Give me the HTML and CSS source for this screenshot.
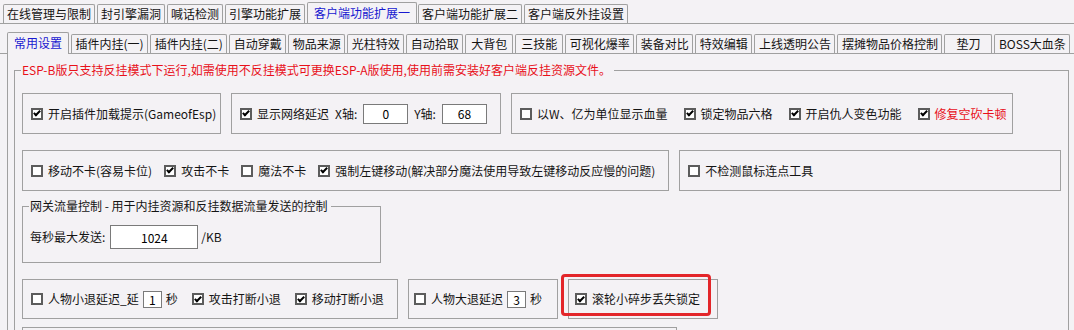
FILE: index.html
```html
<!DOCTYPE html>
<html lang="zh-CN">
<head>
    <meta charset="UTF-8">
    <meta name="viewport" content="width=device-width, initial-scale=1.0">
    <title>客户端功能扩展一</title>
    <link rel="stylesheet" href="styles.css">
</head>
<body>
    <div class="top-tabs">
        <div class="tab">在线管理与限制</div>
        <div class="tab">封引擎漏洞</div>
        <div class="tab">喊话检测</div>
        <div class="tab">引擎功能扩展</div>
        <div class="tab active">客户端功能扩展一</div>
        <div class="tab">客户端功能扩展二</div>
        <div class="tab">客户端反外挂设置</div>
    </div>
    <div class="sub-tabs">
        <div class="tab active">常用设置</div>
        <div class="tab">插件内挂(一)</div>
        <div class="tab">插件内挂(二)</div>
        <div class="tab">自动穿戴</div>
        <div class="tab">物品来源</div>
        <div class="tab">光柱特效</div>
        <div class="tab">自动拾取</div>
        <div class="tab">大背包</div>
        <div class="tab">三技能</div>
        <div class="tab">可视化爆率</div>
        <div class="tab">装备对比</div>
        <div class="tab">特效编辑</div>
        <div class="tab">上线透明公告</div>
        <div class="tab">摆摊物品价格控制</div>
        <div class="tab">垫刀</div>
        <div class="tab">BOSS大血条</div>
    </div>
    <div class="sub-page">
        <fieldset class="group notice">
            <legend>ESP-B版只支持反挂模式下运行,如需使用不反挂模式可更换ESP-A版使用,使用前需安装好客户端反挂资源文件。</legend>
            <div class="row">
                <div class="box box-a">
                    <label class="check"><span class="cb on"></span>开启插件加载提示(GameofEsp)</label>
                </div>
                <div class="box box-b">
                    <label class="check"><span class="cb on"></span>显示网络延迟</label>
                    <span>X轴:</span>
                    <input class="num" type="text" value="0">
                    <span>Y轴:</span>
                    <input class="num" type="text" value="68">
                </div>
                <div class="box box-c">
                    <label class="check"><span class="cb"></span>以W、亿为单位显示血量</label>
                    <label class="check"><span class="cb on"></span>锁定物品六格</label>
                    <label class="check"><span class="cb on"></span>开启仇人变色功能</label>
                    <label class="check red"><span class="cb on"></span>修复空砍卡顿</label>
                </div>
            </div>
            <div class="row">
                <div class="box box-d">
                    <label class="check"><span class="cb"></span>移动不卡(容易卡位)</label>
                    <label class="check"><span class="cb on"></span>攻击不卡</label>
                    <label class="check"><span class="cb"></span>魔法不卡</label>
                    <label class="check"><span class="cb on"></span>强制左键移动(解决部分魔法使用导致左键移动反应慢的问题)</label>
                </div>
                <div class="box box-e">
                    <label class="check"><span class="cb"></span>不检测鼠标连点工具</label>
                </div>
            </div>
            <fieldset class="group gateway">
                <legend>网关流量控制 - 用于内挂资源和反挂数据流量发送的控制</legend>
                <div class="send-line">
                    <span>每秒最大发送:</span>
                    <input class="num wide" type="text" value="1024">
                    <span>/KB</span>
                </div>
            </fieldset>
            <div class="row">
                <div class="box box-f">
                    <label class="check"><span class="cb"></span>人物小退延迟_延<input class="num small" type="text" value="1">秒</label>
                    <label class="check"><span class="cb on"></span>攻击打断小退</label>
                    <label class="check"><span class="cb on"></span>移动打断小退</label>
                </div>
                <div class="box box-g">
                    <label class="check"><span class="cb"></span>人物大退延迟<input class="num small" type="text" value="3">秒</label>
                </div>
                <div class="box box-h">
                    <label class="check"><span class="cb on"></span>滚轮小碎步丢失锁定</label>
                    <span class="mark"></span>
                </div>
            </div>
            <div class="row row-last">
                <div class="box box-i"></div>
            </div>
        </fieldset>
    </div>
</body>
</html>
```

FILE: styles.css
```css
html, body {
    overflow: hidden;
}

body {
    margin: 0;
    background-color: #f4f2f5;
    color: #141414;
    font-family: "Noto Sans CJK SC", sans-serif;
    font-size: 12px;
    line-height: 16px;
}

/* tab strips */
.top-tabs,
.sub-tabs {
    display: flex;
    align-items: flex-end;
    height: 19px;
    border-bottom: 1px solid #a0a0a0;
}

.top-tabs {
    padding: 4px 0 0 3px;
}

.sub-tabs {
    padding: 10px 0 0 7px;
}

.tab {
    box-sizing: border-box;
    height: 19px;
    padding: 0 3px;
    margin-right: 2px;
    border: 1px solid #a0a0a0;
    border-bottom: none;
    border-radius: 2px 2px 0 0;
    line-height: 18px;
    text-align: center;
    white-space: nowrap;
}

    .tab.active {
        height: 21px;
        padding: 0 6px;
        margin-right: 1px;
        line-height: 20px;
        color: #1818d0;
        background-color: #f4f2f5;
    }

.sub-tabs .tab {
    min-width: 48px;
    padding: 0 3.5px;
}

    .sub-tabs .tab.active {
        height: 22px;
        padding: 0 6px;
        margin-bottom: -1px;
        margin-right: 2px;
    }

.sub-page {
    margin-left: 7px;
    padding: 8px 0 0 6px;
    border-left: 1px solid #a0a0a0;
}

/* group boxes */
.group {
    margin: 0;
    min-width: 0;
    border: 1px solid #a0a0a0;
}

    .group > legend {
        margin-left: -1px;
        padding: 0 3px 0 1px;
        line-height: 16px;
    }

.notice {
    margin-right: 5px;
    padding: 15px 7px 0;
    min-height: 300px;
}

    .notice > legend {
        color: #e8101a;
    }

.gateway {
    box-sizing: border-box;
    width: 359px;
    margin-top: 7px;
    padding: 11px 7px 13px;
}

.send-line {
    display: flex;
    align-items: center;
    gap: 3px;
}

.row {
    display: flex;
    gap: 10px;
    margin-top: 16px;
}

.notice > legend + .row {
    margin-top: 0;
}

.row-last {
    margin-top: 8px;
}

.box {
    display: flex;
    align-items: center;
    gap: 14px;
    box-sizing: border-box;
    height: 41px;
    padding: 0 8px;
    border: 1px solid #a0a0a0;
}

.box-a { width: 199px; }
.box-b { width: 270px; gap: 6px; }
.box-c { width: 502px; gap: 16px; }
.box-d { width: 648px; gap: 12px; }
.box-e { width: 382px; }
.box-f { width: 376px; height: 40px; }
.box-g { width: 150px; height: 40px; padding-left: 5px; }
.box-h { width: 150px; height: 40px; position: relative; padding-left: 6px; }
.box-i { width: 655px; height: 40px; }

/* checkbox + caption */
.check {
    display: inline-flex;
    align-items: center;
    gap: 4px;
    white-space: nowrap;
}

    .check.red {
        color: #e8101a;
    }

.cb {
    display: flex;
    align-items: center;
    justify-content: center;
    box-sizing: border-box;
    width: 12px;
    height: 12px;
    margin-right: 1px;
    border: 2px solid #5c5c5c;
    background-color: #fff;
}

    .cb.on::after {
        content: "";
        width: 2px;
        height: 5px;
        margin-top: -2px;
        border: solid #000;
        border-width: 0 2px 2px 0;
        transform: rotate(45deg);
    }

.num {
    box-sizing: border-box;
    width: 45px;
    height: 20px;
    padding: 0;
    border: 1px solid #7a7a7a;
    background-color: #fff;
    color: #000;
    font: inherit;
    text-align: center;
}

    .num.small {
        width: 19px;
        height: 17px;
    }

    .num.wide {
        width: 88px;
        height: 24px;
        margin-left: 2px;
    }

/* red highlight drawn over the screenshot */
.mark {
    position: absolute;
    left: -8px;
    top: -6px;
    box-sizing: border-box;
    width: 150px;
    height: 42px;
    border: 3px solid #e3262a;
    border-radius: 4px;
}
```
